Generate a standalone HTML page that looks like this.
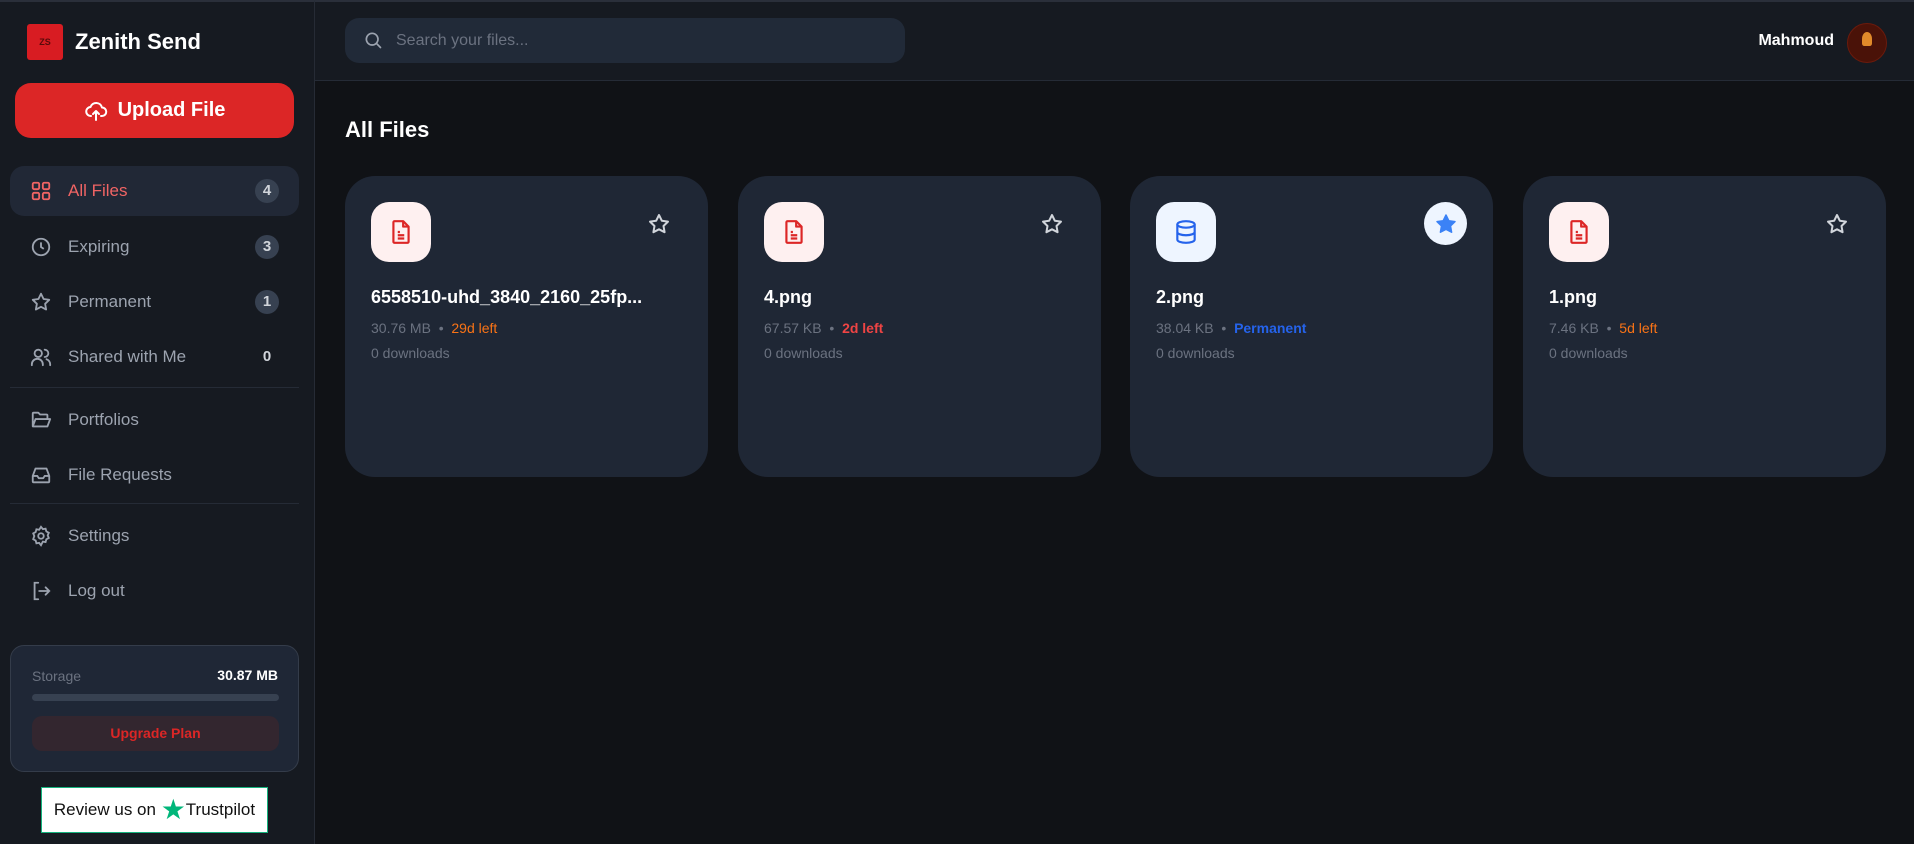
<!DOCTYPE html>
<html><head><meta charset="utf-8"><style>
*{box-sizing:border-box;margin:0;padding:0}
body{width:1914px;height:844px;overflow:hidden;background:#101216;font-family:"Liberation Sans",sans-serif;position:relative}
.sb{position:absolute;left:0;top:0;width:315px;height:844px;background:#161a21;border-right:1px solid #262b35;border-top:2px solid #2a2f3a}
.logo{position:absolute;left:27px;top:22px;width:36px;height:36px;background:#d81c22;border-radius:3px;color:#5a0a0a;font-size:9px;font-weight:bold;text-align:center;line-height:36px}
.brand{position:absolute;left:75px;top:27px;color:#fff;font-size:22px;font-weight:bold}
.up{position:absolute;left:15px;top:81px;width:279px;height:55px;background:#dc2626;border-radius:16px;color:#fff;font-size:20px;font-weight:bold;display:flex;align-items:center;justify-content:center;gap:10px}
.nav{position:absolute;left:10px;width:289px;height:50px;display:flex;align-items:center;color:#9ca3af;font-size:17px}
.nav svg{position:absolute;left:20px}
.nav span.t{position:absolute;left:58px}
.nav .b{position:absolute;right:20px;min-width:24px;height:24px;border-radius:12px;background:#374151;color:#d1d5db;font-size:15px;text-align:center;line-height:24px;font-weight:bold}
.act{background:#212836;border-radius:14px;color:#f06464}
.hr{position:absolute;left:10px;width:289px;height:1px;background:#252b36}
.st{position:absolute;left:10px;top:643px;width:289px;height:127px;background:#1f2736;border:1px solid #343c4a;border-radius:14px}
.tp{position:absolute;left:41px;top:785px;width:227px;height:46px;background:#fff;border:1px solid #14b37d;display:flex;align-items:center;justify-content:center;font-size:17px;color:#111}
.hd{position:absolute;left:315px;top:0;right:0;height:81px;background:#161a21;border-bottom:1px solid #252b36;border-top:2px solid #2a2f3a}
.srch{position:absolute;left:30px;top:16px;width:560px;height:45px;background:#212a38;border-radius:14px;color:#6b7280;font-size:16px;line-height:45px;padding-left:51px}
.card{position:absolute;top:176px;width:363px;height:301px;background:#1f2735;border-radius:30px}
.ic{position:absolute;left:26px;top:26px;width:60px;height:60px;border-radius:18px;background:#fef0f0;display:flex;align-items:center;justify-content:center}
.star{position:absolute;right:37px;top:36px}
.nm{position:absolute;left:26px;top:111px;color:#fff;font-size:18px;font-weight:bold}
.mt{position:absolute;left:26px;top:144px;color:#6b7280;font-size:14px}
.dl{position:absolute;left:26px;top:169px;color:#6b7280;font-size:14px}
</style></head><body>
<div class="sb">
<div class="logo">ZS</div><div class="brand">Zenith Send</div>
<div class="up"><svg width="24" height="24" viewBox="0 0 24 24" fill="none" stroke="#fff" stroke-width="2" stroke-linecap="round" stroke-linejoin="round"><path d="M7 17a4.5 4.5 0 0 1-.5-9A6 6 0 0 1 18 8.5a4 4 0 0 1 0 8.5h-1"/><path d="M12 21v-9M9 15l3-3 3 3"/></svg>Upload File</div>
<div class="nav act" style="top:164px"><svg width="22" height="22" viewBox="0 0 24 24" fill="none" stroke="#f06464" stroke-width="2"><rect x="3" y="3" width="7" height="7" rx="1.5"/><rect x="14" y="3" width="7" height="7" rx="1.5"/><rect x="3" y="14" width="7" height="7" rx="1.5"/><rect x="14" y="14" width="7" height="7" rx="1.5"/></svg><span class="t">All Files</span><span class="b">4</span></div>
<div class="nav" style="top:220px"><svg width="22" height="22" viewBox="0 0 24 24" fill="none" stroke="#9ca3af" stroke-width="2"><circle cx="12" cy="12" r="9"/><path d="M12 7v5l3 2"/></svg><span class="t">Expiring</span><span class="b">3</span></div>
<div class="nav" style="top:275px"><svg width="22" height="22" viewBox="0 0 24 24" fill="none" stroke="#9ca3af" stroke-width="2" stroke-linejoin="round"><path d="M12 3l2.8 5.7 6.2.9-4.5 4.4 1.1 6.2L12 17.3 6.4 20.2l1.1-6.2L3 9.6l6.2-.9z"/></svg><span class="t">Permanent</span><span class="b">1</span></div>
<div class="nav" style="top:330px"><svg width="22" height="22" viewBox="0 0 24 24" fill="none" stroke="#9ca3af" stroke-width="2" stroke-linecap="round"><circle cx="9" cy="8" r="4"/><path d="M2 21v-1a6 6 0 0 1 12 0v1M16 4a4 4 0 0 1 0 8M22 21v-1a6 6 0 0 0-4-5.6"/></svg><span class="t">Shared with Me</span><span class="b" style="background:none">0</span></div>
<div class="hr" style="top:385px"></div>
<div class="nav" style="top:393px"><svg width="22" height="22" viewBox="0 0 24 24" fill="none" stroke="#9ca3af" stroke-width="2" stroke-linejoin="round"><path d="M3 19V5a1 1 0 0 1 1-1h5l2 2h7a1 1 0 0 1 1 1v3M3 19l3-8h16l-3 8z"/></svg><span class="t">Portfolios</span></div>
<div class="nav" style="top:448px"><svg width="22" height="22" viewBox="0 0 24 24" fill="none" stroke="#9ca3af" stroke-width="2" stroke-linejoin="round"><path d="M3 13l3-8h12l3 8v6a1 1 0 0 1-1 1H4a1 1 0 0 1-1-1z"/><path d="M3 13h5l1.5 2.5h5L16 13h5"/></svg><span class="t">File Requests</span></div>
<div class="hr" style="top:501px"></div>
<div class="nav" style="top:509px"><svg width="22" height="22" viewBox="0 0 24 24" fill="none" stroke="#9ca3af" stroke-width="2"><circle cx="12" cy="12" r="3"/><path d="M12 2l2 2.5 3-.5.8 3 2.7 1.5-1.2 2.8 1.2 2.8-2.7 1.5-.8 3-3-.5L12 22l-2-2.5-3 .5-.8-3-2.7-1.5L4.7 12 3.5 9.2 6.2 7.7 7 4.7l3 .5z"/></svg><span class="t">Settings</span></div>
<div class="nav" style="top:564px"><svg width="22" height="22" viewBox="0 0 24 24" fill="none" stroke="#9ca3af" stroke-width="2" stroke-linecap="round"><path d="M9 3H5v18h4M10 12h11M17 8l4 4-4 4"/></svg><span class="t">Log out</span></div>
<div class="st">
<div style="position:absolute;left:21px;top:22px;color:#6b7280;font-size:14px">Storage</div>
<div style="position:absolute;right:20px;top:21px;color:#fff;font-size:14px;font-weight:bold">30.87 MB</div>
<div style="position:absolute;left:21px;top:48px;width:247px;height:7px;border-radius:4px;background:#374151"></div>
<div style="position:absolute;left:21px;top:70px;width:247px;height:35px;border-radius:10px;background:#33262f;color:#dc2626;font-size:14px;font-weight:bold;text-align:center;line-height:35px">Upgrade Plan</div>
</div>
<div class="tp">Review us on&nbsp;<span style="color:#00b67a;font-size:28px;line-height:20px">★</span>Trustpilot</div>
</div>
<div class="hd">
<div class="srch"><svg style="position:absolute;left:18px;top:12px" width="20" height="20" viewBox="0 0 24 24" fill="none" stroke="#9ca3af" stroke-width="2" stroke-linecap="round"><circle cx="11" cy="11" r="7"/><path d="M16 16l5 5"/></svg>Search your files...</div>
<div style="position:absolute;right:80px;top:30px;color:#fff;font-size:16px;font-weight:bold">Mahmoud</div>
<div style="position:absolute;right:27px;top:21px;width:40px;height:40px;border-radius:50%;background:#4a1208;border:1px solid #6b1a0c"><div style="position:absolute;left:14px;top:8px;width:10px;height:14px;background:#e08a2a;border-radius:50% 50% 20% 20%"></div></div>
</div>
<div style="position:absolute;left:345px;top:117px;color:#fff;font-size:22px;font-weight:bold">All Files</div>

<div class="card" style="left:345px">
<div class="ic"><svg width="26" height="26" viewBox="0 0 24 24" fill="none" stroke="#dc2626" stroke-width="2" stroke-linejoin="round"><path d="M6 2h8l5 5v14a1 1 0 0 1-1 1H6a1 1 0 0 1-1-1V3a1 1 0 0 1 1-1z"/><path d="M14 2v5h5M9 12h2M9 15h6M9 18h6"/></svg></div>
<svg class="star" width="24" height="24" viewBox="0 0 24 24" fill="none" stroke="#d1d5db" stroke-width="2" stroke-linejoin="round"><path d="M12 3l2.8 5.7 6.2.9-4.5 4.4 1.1 6.2L12 17.3 6.4 20.2l1.1-6.2L3 9.6l6.2-.9z"/></svg>
<div class="nm">6558510-uhd_3840_2160_25fp...</div>
<div class="mt">30.76 MB &nbsp;•&nbsp; <span style="color:#f97316">29d left</span></div>
<div class="dl">0 downloads</div></div>

<div class="card" style="left:738px">
<div class="ic"><svg width="26" height="26" viewBox="0 0 24 24" fill="none" stroke="#dc2626" stroke-width="2" stroke-linejoin="round"><path d="M6 2h8l5 5v14a1 1 0 0 1-1 1H6a1 1 0 0 1-1-1V3a1 1 0 0 1 1-1z"/><path d="M14 2v5h5M9 12h2M9 15h6M9 18h6"/></svg></div>
<svg class="star" width="24" height="24" viewBox="0 0 24 24" fill="none" stroke="#d1d5db" stroke-width="2" stroke-linejoin="round"><path d="M12 3l2.8 5.7 6.2.9-4.5 4.4 1.1 6.2L12 17.3 6.4 20.2l1.1-6.2L3 9.6l6.2-.9z"/></svg>
<div class="nm">4.png</div>
<div class="mt">67.57 KB &nbsp;•&nbsp; <span style="color:#ef4444;font-weight:bold">2d left</span></div>
<div class="dl">0 downloads</div></div>

<div class="card" style="left:1130px">
<div class="ic" style="background:#eef5ff"><svg width="26" height="26" viewBox="0 0 24 24" fill="none" stroke="#2563eb" stroke-width="2"><ellipse cx="12" cy="5" rx="8" ry="3"/><path d="M4 5v14c0 1.7 3.6 3 8 3s8-1.3 8-3V5M4 12c0 1.7 3.6 3 8 3s8-1.3 8-3"/></svg></div>
<div style="position:absolute;right:26px;top:26px;width:43px;height:43px;border-radius:50%;background:#eef5ff;display:flex;align-items:center;justify-content:center"><svg width="24" height="24" viewBox="0 0 24 24" fill="#3b82f6" stroke="#3b82f6" stroke-width="1.5" stroke-linejoin="round"><path d="M12 3l2.8 5.7 6.2.9-4.5 4.4 1.1 6.2L12 17.3 6.4 20.2l1.1-6.2L3 9.6l6.2-.9z"/></svg></div>
<div class="nm">2.png</div>
<div class="mt">38.04 KB &nbsp;•&nbsp; <span style="color:#2563eb;font-weight:bold">Permanent</span></div>
<div class="dl">0 downloads</div></div>

<div class="card" style="left:1523px">
<div class="ic"><svg width="26" height="26" viewBox="0 0 24 24" fill="none" stroke="#dc2626" stroke-width="2" stroke-linejoin="round"><path d="M6 2h8l5 5v14a1 1 0 0 1-1 1H6a1 1 0 0 1-1-1V3a1 1 0 0 1 1-1z"/><path d="M14 2v5h5M9 12h2M9 15h6M9 18h6"/></svg></div>
<svg class="star" width="24" height="24" viewBox="0 0 24 24" fill="none" stroke="#d1d5db" stroke-width="2" stroke-linejoin="round"><path d="M12 3l2.8 5.7 6.2.9-4.5 4.4 1.1 6.2L12 17.3 6.4 20.2l1.1-6.2L3 9.6l6.2-.9z"/></svg>
<div class="nm">1.png</div>
<div class="mt">7.46 KB &nbsp;•&nbsp; <span style="color:#f97316">5d left</span></div>
<div class="dl">0 downloads</div></div>
</body></html>
